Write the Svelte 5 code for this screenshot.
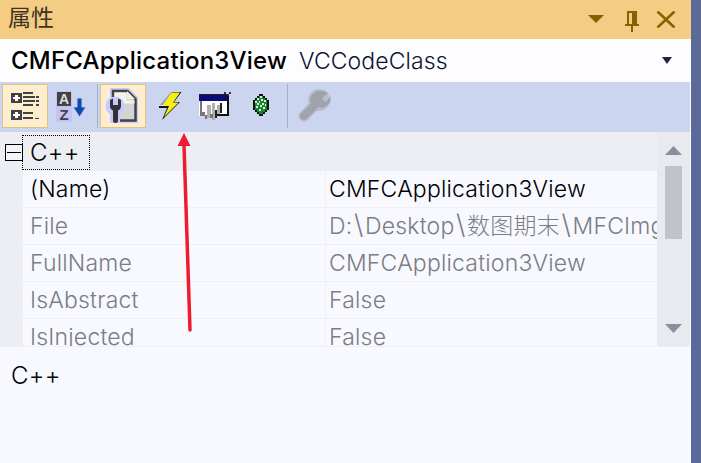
<script lang="ts">
  const rows = [
    { name: '(Name)', value: 'CMFCApplication3View', active: true },
    { name: 'File', value: 'D:\\Desktop\\数图期末\\MFCImg', active: false },
    { name: 'FullName', value: 'CMFCApplication3View', active: false },
    { name: 'IsAbstract', value: 'False', active: false },
    { name: 'IsInjected', value: 'False', active: false }
  ];
</script>

<div class="window">
  <div class="panel">
    <header class="title">
      <span class="title-text">属性</span>
      <div class="title-actions">
        <svg width="16" height="8" viewBox="0 0 16 8" class="menu"><path d="M0 0h16L8 8z" fill="#8a6100" /></svg>
        <svg width="14" height="21" viewBox="0 0 14 21" class="pin" shape-rendering="crispEdges">
          <path d="M2 0h10v13h2v2H8v6H6v-6H0v-2h2zM4 2v11h3V2z" fill="#8a6100" fill-rule="evenodd" />
        </svg>
        <svg width="20" height="17" viewBox="0 0 20 17" class="close"><path d="M1.500 0.500l17 16M18.500 0.500l-17 16" stroke="#8a6100" stroke-width="2.600" fill="none" /></svg>
      </div>
    </header>

    <div class="combo">
      <span class="combo-name">CMFCApplication3View</span>
      <span class="combo-type">VCCodeClass</span>
      <svg width="10" height="7" viewBox="0 0 10 7" class="combo-arrow"><path d="M0 0h10L5 7z" fill="#1e2540" /></svg>
    </div>

    <!-- icon viewBoxes use the screenshot's own coordinates -->
    <div class="toolbar">
      <button class="tool on" aria-label="Categorized">
        <svg width="44" height="42" viewBox="3 85 44 42" shape-rendering="crispEdges">
          <g fill="#424242">
            <rect x="11" y="93" width="11" height="10" /><rect x="11" y="110" width="11" height="10" />
            <rect x="23" y="92" width="10" height="2" />
            <rect x="23" y="96" width="12" height="2" /><rect x="36" y="96" width="3" height="2" />
            <rect x="23" y="100" width="12" height="2" /><rect x="36" y="100" width="3" height="2" />
            <rect x="23" y="104" width="10" height="2" /><rect x="36" y="104" width="3" height="2" />
            <rect x="23" y="112" width="10" height="2" />
            <rect x="23" y="117" width="10" height="2" /><rect x="35" y="118" width="4" height="1" />
          </g>
          <path d="M13 97h7v2h-7zM15 95h3v6h-3zM13 114h7v2h-7zM15 112h3v6h-3z" fill="#fff" />
        </svg>
      </button>
      <button class="tool" aria-label="Alphabetical">
        <svg width="44" height="42" viewBox="49 85 44 42">
          <rect x="56" y="91" width="16" height="31" fill="#c4c4f4" />
          <rect x="57" y="92" width="14" height="14" fill="#424242" />
          <text x="64" y="104" class="az">A</text>
          <text x="64" y="120" class="az dark">Z</text>
          <path d="M77 98h5v9h4l-6.500 10L73 107h4z" fill="#0b4fa8" stroke="#c4c4f4" stroke-width="1" />
        </svg>
      </button>
      <span class="sep"></span>
      <button class="tool on" aria-label="Properties">
        <svg width="44" height="42" viewBox="101 85 44 42">
          <path d="M110 88h19l9 9v26h-28z" fill="#c9c9ff" />
          <path d="M113 91h14.500l8 8v21.500H113z" fill="#d4d4d4" stroke="#424242" stroke-width="2.500" />
          <path d="M114.500 92.500h12v8h8v3h-20z" fill="#f4f2ec" />
          <path d="M127 91v8h8" fill="#fdeed0" />
          <circle cx="115" cy="106" r="9.500" fill="#c9c9ff" />
          <rect x="110" y="108" width="10" height="14" fill="#c9c9ff" />
          <path d="M110 100v6a5 5 0 0 0 3 4.600V120.500a2.500 2.500 0 0 0 5 0V110.600a5 5 0 0 0 3-4.600v-6l-3-1.500V105h-5v-6.500z" fill="#333" />
        </svg>
      </button>
      <button class="tool" aria-label="Events">
        <svg width="44" height="42" viewBox="147 85 44 42">
          <path d="M171 92l-12 14h4l9-12z" fill="#9a9cae" />
          <path d="M172 92h9.500l-7.500 10h6L162 120l5-12h-8v-2.500h10z" fill="#111" />
          <path d="M171.500 92.500h8.500l-7 10h5.500L164 117l5-11h-7z" fill="#f6ee14" />
          <path d="M159 105h7v1h-7z" fill="#e8e8e8" />
        </svg>
      </button>
      <button class="tool" aria-label="Messages">
        <svg width="44" height="42" viewBox="193 85 44 42" shape-rendering="crispEdges">
          <rect x="199" y="94" width="28" height="22" fill="#fff" />
          <rect x="199" y="94" width="28" height="1" fill="#222" />
          <rect x="199" y="95" width="28" height="6" fill="#0a0a78" />
          <path d="M227 94h2v22h-2zM214 114h15v2h-15z" fill="#111" />
          <path d="M229 92h2v2h-2zM227 94h2v2h-2zM224 92h2v2h-2z" fill="#333" />
          <path d="M207 105h4v13h-4zM212 103h3v17h-3zM217 105h3v9h-3z" fill="#b0b0b0" />
          <path d="M200 101h2v11h3v4h-5zM205 115h2v4h-2zM210 114h3v4h-3z" fill="#777" />
          <path d="M215 110h2v8h-2zM220 103h2v10h-2z" fill="#222" />
        </svg>
      </button>
      <button class="tool" aria-label="Overrides">
        <svg width="44" height="42" viewBox="239 85 44 42" shape-rendering="crispEdges">
          <path d="M259 94h4v2h2v2h2v2h2v10h-2v2h-2v2h-2v2h-4v-2h-2v-2h-2v-2h-2v-10h2v-2h2v-2h2z" fill="#111" />
          <path d="M259 96h4v2h2v2h2v10h-2v2h-2v2h-4v-2h-2v-2h-2v-10h2v-2h2z" fill="#0f8a2c" />
          <path d="M260 96h2v2h-2zM257 98h2v2h-2zM261 99h2v2h-2zM264 100h2v2h-2zM255 101h2v2h-2zM259 101h1v2h-1zM257 103h2v2h-2zM262 103h2v2h-2zM265 104h1v2h-1zM260 105h2v2h-2zM256 106h2v2h-2zM263 107h2v2h-2zM259 109h2v2h-2z" fill="#e4ece6" />
        </svg>
      </button>
      <span class="sep"></span>
      <button class="tool" aria-label="Property pages">
        <svg width="44" height="42" viewBox="291 85 44 42">
          <path d="M304 116l13-13" stroke="#b9bdcc" stroke-width="11" stroke-linecap="round" />
          <circle cx="319" cy="100" r="11" fill="#b9bdcc" />
          <path d="M304 116l13-13" stroke="#a0a2ac" stroke-width="8" stroke-linecap="round" />
          <path d="M322 91a9.500 9.500 0 0 1 6 2l-6 5.500 3.500 3.500 5-5.500a9.500 9.500 0 0 1-13 10.500l-6-2a9.500 9.500 0 0 1 10.500-14z" fill="#a0a2ac" />
        </svg>
      </button>
    </div>

    <div class="grid-wrap">
      <div class="grid">
        <div class="category">
          <span class="toggle"></span>
          <span class="category-name">C++</span>
        </div>
        {#each rows as row}
          <div class="row" class:active={row.active}>
            <span class="cell name">{row.name}</span>
            <span class="cell value">
              {#each row.value.split('\\') as part, i}{#if i > 0}<span class="slash">\</span>{/if}{part}{/each}
            </span>
          </div>
        {/each}
      </div>
      <div class="scrollbar">
        <svg width="17" height="9" viewBox="0 0 17 9" class="up"><path d="M8.500 0L17 9H0z" fill="#8b8da0" /></svg>
        <span class="thumb"></span>
        <svg width="17" height="9" viewBox="0 0 17 9" class="down"><path d="M0 0h17L8.500 9z" fill="#8b8da0" /></svg>
      </div>
    </div>

    <div class="description">C++</div>
  </div>

  <svg class="annotation" width="20" height="204" viewBox="0 0 20 204">
    <path d="M9 12L15 197" stroke="#ee1c30" stroke-width="3.500" stroke-linecap="round" fill="none" />
    <path d="M9 0L15.500 13H2.500z" fill="#ee1c30" />
  </svg>
</div>

<style>
  :global(body) {
    margin: 0;
    background: #5c6a99;
  }

  .window {
    position: relative;
    width: 701px;
    height: 463px;
    overflow: hidden;
    background: #5c6a99;
    font-family: Inter, "Noto Sans CJK SC", sans-serif;
    color: #000;
  }

  .panel {
    width: 690px;
    height: 463px;
    display: flex;
    flex-direction: column;
    background: #f8f9ff;
    border-right: 1px solid #fbfbff;
  }

  .title {
    flex: 0 0 39px;
    display: flex;
    align-items: center;
    justify-content: space-between;
    background: #f5cc84;
    margin-right: -1px;
  }

  .title-text {
    margin-left: 8px;
    padding-bottom: 8px;
    font-size: 23px;
    line-height: 30px;
    font-family: "Noto Sans CJK SC", sans-serif;
    color: #40341e;
  }

  .title-actions {
    display: flex;
    align-items: center;
    margin-right: 15px;
    padding-bottom: 1px;
  }

  .pin {
    margin-left: 21px;
    margin-top: 4px;
  }

  .close {
    margin-left: 17px;
    margin-top: 1px;
  }

  .combo {
    flex: 0 0 43px;
    display: flex;
    align-items: center;
    background: #fdfdff;
    font-size: 23px;
    padding: 0 18px 0 11px;
  }

  .combo-name {
    font-size: 24px;
    font-weight: 450;
    letter-spacing: 0.2px;
  }

  .combo-type {
    margin-left: 12px;
    font-weight: 300;
    letter-spacing: 0.1px;
    color: #0c1430;
  }

  .combo-arrow {
    margin-left: auto;
  }

  .toolbar {
    flex: 0 0 50px;
    display: flex;
    align-items: center;
    background: #ccd5ef;
    padding-left: 2px;
    box-sizing: border-box;
    padding-bottom: 2px;
  }

  .tool {
    width: 46px;
    height: 44px;
    padding: 0;
    border: 1px solid transparent;
    background: none;
    display: flex;
    box-sizing: border-box;
  }

  .tool svg {
    display: block;
  }

  .tool.on {
    background: #fdeed0;
    border: 1px solid #e5c17e;
  }

  .az {
    font-size: 14px;
    font-weight: 700;
    font-family: "Liberation Sans", sans-serif;
    text-anchor: middle;
    fill: #ddd;
  }

  .az.dark {
    fill: #424242;
    font-size: 15px;
  }

  .sep {
    width: 1px;
    height: 44px;
    margin: 0 2px 0 3px;
    background: #9db0cf;
  }

  .grid-wrap {
    display: flex;
    background: #edeef4;
    overflow: hidden;
    border-bottom: 1px solid #eef0f6;
    box-sizing: border-box;
    flex: 0 0 215px;
  }

  .grid {
    width: 657px;
    min-width: 0;
    overflow: hidden;
  }

  .category {
    height: 39px;
    display: flex;
    align-items: center;
    padding-top: 2px;
    box-sizing: border-box;
  }

  .toggle {
    position: relative;
    width: 16px;
    height: 15px;
    margin-left: 5px;
    border: 1px solid #000;
    background: #f4f4f8;
    flex: none;
  }

  .toggle::after {
    content: "";
    position: absolute;
    left: 1px;
    right: 1px;
    top: 7px;
    height: 1px;
    background: #000;
  }

  .category-name {
    padding-left: 7px;
    width: 59px;
    height: 33px;
    line-height: 33px;
    font-size: 24px;
    letter-spacing: 0.3px;
    font-weight: 300;
    border: 1px dotted #000;
    box-sizing: content-box;
    margin-left: -1px;
  }

  .row {
    height: 37px;
    margin-left: 23px;
    display: grid;
    grid-template-columns: 302px 1fr;
    background: #f8f9ff;
    border-bottom: 1px solid #eef0f6;
    box-sizing: border-box;
    color: #7b7d85;
    font-size: 23px;
    font-weight: 300;
    letter-spacing: 0.2px;
    line-height: 36px;
  }

  .row.active {
    color: #000;
    font-weight: 350;
  }

  .cell {
    padding-left: 7px;
    white-space: nowrap;
    overflow: hidden;
  }

  .value {
    padding-left: 3px;
    border-left: 1px solid #eef0f6;
  }

  .slash {
    font-size: 27px;
    line-height: 0;
    margin: 0 1.500px;
  }

  .scrollbar {
    flex: 1;
    display: flex;
    flex-direction: column;
    align-items: center;
    background: #e9eaf0;
  }

  .up {
    margin-top: 14px;
  }

  .thumb {
    width: 17px;
    height: 73px;
    margin-top: 11px;
    background: #c2c3ca;
  }

  .down {
    margin-top: 85px;
  }

  .description {
    flex: 1;
    padding: 14px 11px;
    font-size: 24px;
    font-weight: 300;
    letter-spacing: 0.3px;
    line-height: 30px;
    background: #f8f9ff;
  }

  .annotation {
    position: absolute;
    left: 175px;
    top: 133px;
  }
</style>
